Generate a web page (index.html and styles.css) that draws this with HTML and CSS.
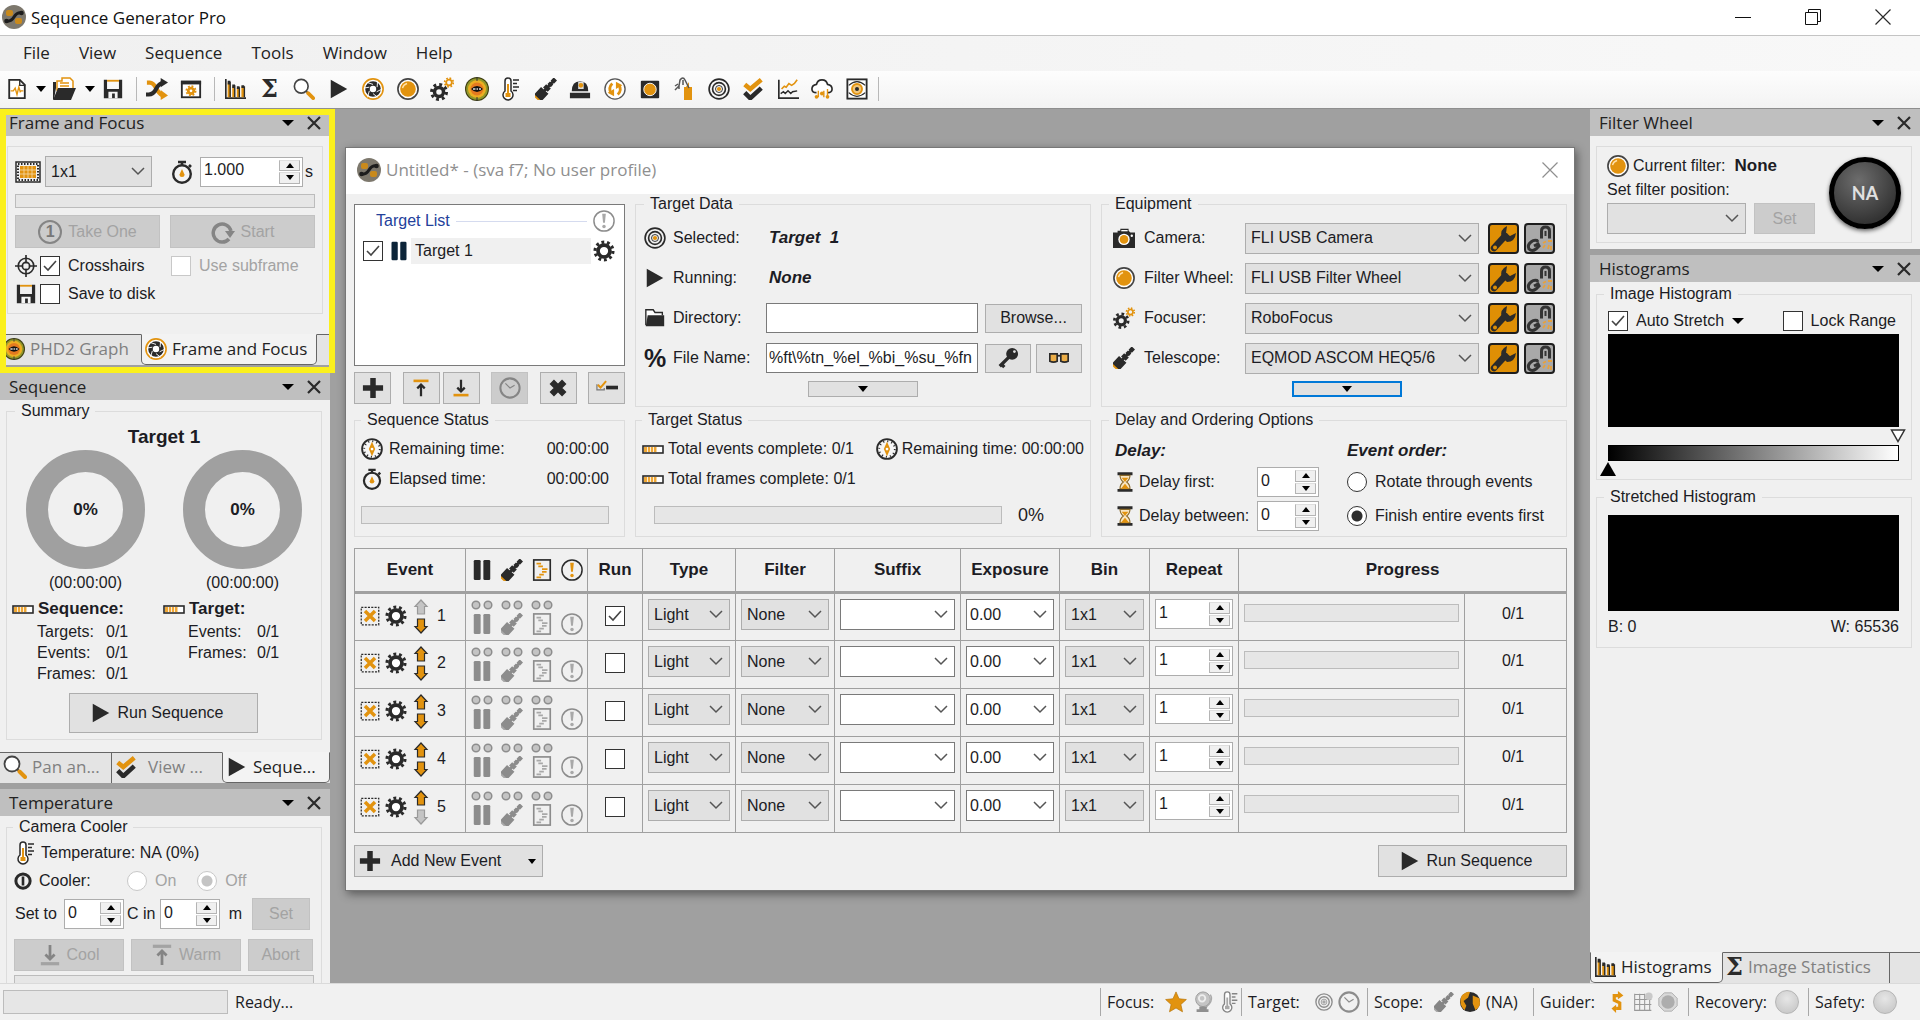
FILE: index.html
```html
<!DOCTYPE html>
<html lang="en">
<head>
<meta charset="utf-8">
<title>Sequence Generator Pro</title>
<link rel="stylesheet" href="styles.css">
</head>
<body>
<svg class="sprite" aria-hidden="true">
  <symbol id="logo" viewBox="0 0 24 24"><circle cx="12" cy="12" r="12" fill="#7d786d"/><rect x="4" y="5" width="7" height="6" rx="2" fill="#c98a1c"/><rect x="13" y="13" width="7" height="6" rx="2" fill="#c98a1c"/><path d="M4 16 Q9 17 12 12 T20 8" fill="none" stroke="#1d1d1d" stroke-width="3"/><circle cx="4.500" cy="16" r="2.300" fill="#1d1d1d"/><circle cx="19.500" cy="8" r="2.300" fill="#1d1d1d"/></symbol>
  <symbol id="doc" viewBox="0 0 24 24"><path d="M3.500 2H15l5.500 5.500V22h-17z" fill="#fff" stroke="currentColor" stroke-width="2"/><path d="M15 2v6h6" fill="none" stroke="currentColor" stroke-width="1.500"/><path d="M5 14h3l2-3 2 7 2-8 1.500 5 1-1H19" fill="none" stroke="var(--amber)" stroke-width="1.500"/></symbol>
  <symbol id="open" viewBox="0 0 24 24"><path d="M5 4h5V1h8l3 3v9H5z" fill="#fff" stroke="var(--amber)" stroke-width="1.500"/><path d="M8 6h9M8 9h9" stroke="var(--amber)" stroke-width="1.500"/><path d="M1 22V5h3v6l-2 11z" fill="currentColor"/><path d="M6 11h18l-5 12H1z" fill="currentColor"/></symbol>
  <symbol id="save" viewBox="0 0 24 24"><path d="M2 2h3.500v10h13V2H22v20H2z" fill="currentColor"/><path d="M5.500 3h13" stroke="var(--amber)" stroke-width="2"/><path d="M7 22v-7h10v7h-3v-5h-3v5z" fill="#f4f4f4"/></symbol>
  <symbol id="shuffle" viewBox="0 0 24 24"><path d="M1 5h3q4 0 7 6t7 8" fill="none" stroke="var(--amber)" stroke-width="4.500"/><path d="M16 13l8 6-8 5z" fill="var(--amber)"/><path d="M0 18h3q5 0 8-6t8-7" fill="none" stroke="currentColor" stroke-width="4.500"/><path d="M16 0l8 5-8 5z" fill="currentColor"/></symbol>
  <symbol id="wingear" viewBox="0 0 24 24"><rect x="2" y="4" width="20" height="17" fill="#fff" stroke="currentColor" stroke-width="2"/><path d="M1 3h22v4H1z" fill="currentColor"/><circle cx="12" cy="14" r="3" fill="none" stroke="var(--amber)" stroke-width="3"/><circle cx="12" cy="14" r="5" fill="none" stroke="var(--amber)" stroke-width="2" stroke-dasharray="2 1.920"/></symbol>
  <symbol id="bars" viewBox="0 0 24 24"><path d="M2 1v21h22" fill="none" stroke="currentColor" stroke-width="1.800"/><path d="M4 5h3v16H4zM9 9h3v12H9zM14 11h3v10h-3zM19 9h3v12h-3z" fill="var(--amber)"/><path d="M4 3h3v4H4zM6 4h1.500v17H6zM9 7h3v4H9zM11 8h1.500v13H11zM14 9h3v3h-3zM16 10h1.500v11H16zM19 8h3v3h-3zM21.500 9H23v12h-1.500z" fill="currentColor"/></symbol>
  <symbol id="search" viewBox="0 0 24 24"><circle cx="9" cy="9" r="7.500" fill="#fff" stroke="#444" stroke-width="1.800"/><path d="M14 14l3 3" stroke="#444" stroke-width="2"/><path d="M16.500 16.500L22 22" stroke="var(--amber)" stroke-width="4" stroke-linecap="round"/></symbol>
  <symbol id="play" viewBox="0 0 24 24"><path d="M3 2v20l18-10z" fill="currentColor"/></symbol>
  <symbol id="shutter" viewBox="0 0 24 24"><circle cx="12" cy="12" r="11" fill="#fff" stroke="var(--amber)" stroke-width="1.800"/><circle cx="12" cy="12" r="6" fill="none" stroke="currentColor" stroke-width="5"/><path d="M12 7l-6-2M16.500 10L17 3M16 15l6-3M12 17l5 4M8 14l-2 7M8 10l-6 1" stroke="#fff" stroke-width="1"/></symbol>
  <symbol id="filter" viewBox="0 0 24 24"><circle cx="12" cy="12" r="11" fill="#fff" stroke="#444" stroke-width="1.800"/><circle cx="12" cy="12" r="8.500" fill="var(--amber)"/><path d="M6 11q1-4 5-5" fill="none" stroke="#ffe0a8" stroke-width="1.500"/></symbol>
  <symbol id="gear" viewBox="0 0 24 24"><circle cx="12" cy="12" r="6.500" fill="#fff" stroke="currentColor" stroke-width="4"/><circle cx="12" cy="12" r="9.750" fill="none" stroke="currentColor" stroke-width="3.500" stroke-dasharray="3.060 3.060"/></symbol>
  <symbol id="gears" viewBox="0 0 24 24"><circle cx="9" cy="15" r="4.500" fill="none" stroke="currentColor" stroke-width="3.500"/><circle cx="9" cy="15" r="7.500" fill="none" stroke="currentColor" stroke-width="3" stroke-dasharray="2.900 2.990"/><circle cx="19" cy="5.500" r="2.800" fill="none" stroke="var(--amber)" stroke-width="1.800"/><circle cx="19" cy="5.500" r="4.300" fill="none" stroke="var(--amber)" stroke-width="1.800" stroke-dasharray="1.690 1.690"/></symbol>
  <symbol id="phd" viewBox="0 0 24 24"><circle cx="12" cy="12" r="12" fill="#3f3f14"/><circle cx="12" cy="12" r="10.800" fill="#93992a"/><circle cx="12" cy="12" r="9" fill="#ecae22"/><circle cx="12" cy="12" r="6.500" fill="#e57a20"/><path d="M6 12q6-6 12 0-6 6-12 0z" fill="#111"/><path d="M8 12h2.500M11.500 12h1.500M14 12h2" stroke="#ddd" stroke-width="1.500"/><path d="M12 0v4M12 20v4" stroke="#333"/></symbol>
  <symbol id="thermo" viewBox="0 0 24 24"><path d="M6 14V4a3 3 0 0 1 6 0v10a5 5 0 1 1-6 0z" fill="#fff" stroke="currentColor" stroke-width="1.500"/><path d="M8 7h2v9h1.500v4h-5v-4H8z" fill="var(--amber)"/><path d="M14 3h6M14 6.500h4M14 10h6M14 13.500h4" stroke="currentColor" stroke-width="1.600"/></symbol>
  <symbol id="scope" viewBox="0 0 24 24"><g transform="rotate(-47 12 12)"><path d="M-3 7.500h3v9h-3z" fill="var(--amber)"/><path d="M-1 6.500h11v11H-1zM11 8.500h5v7h-5zM17 9.500h4v5h-4zM22 9.500h5v5h-5zM9 10.500h15v3H9z" fill="currentColor"/></g></symbol>
  <symbol id="dome" viewBox="0 0 24 24"><path d="M1 16h22v6H1zM3 14.500q0-11 9-11t9 11z" fill="currentColor"/><path d="M10 4h6v8h-6z" fill="#ddd"/><circle cx="13" cy="8" r="2.500" fill="var(--amber)"/></symbol>
  <symbol id="cycle" viewBox="0 0 24 24"><circle cx="12" cy="12" r="11" fill="#fff" stroke="#555" stroke-width="1.500"/><path d="M9 6q-5 5-1 11M15 18q5-5 1-11" fill="none" stroke="var(--amber)" stroke-width="3"/><path d="M4 16l7-4v8zM20 8l-7 4V4z" fill="var(--amber)"/></symbol>
  <symbol id="flat" viewBox="0 0 24 24"><rect x="2" y="3" width="20" height="19" rx="1" fill="currentColor"/><circle cx="12" cy="12.500" r="6.800" fill="var(--amber)" stroke="#fff"/></symbol>
  <symbol id="hand" viewBox="0 0 24 24"><path d="M12 10h2l3-5v5h3v13h-8z" fill="var(--amber)"/><path d="M3 13l4-4 1-6q3-4 5 0l4 8M7 12V8M6 7L3 9M11 3v5" fill="none" stroke="#555" stroke-width="1.500"/></symbol>
  <symbol id="target" viewBox="0 0 24 24"><g fill="none" stroke="currentColor"><circle cx="12" cy="12" r="10.800" stroke-width="1.800"/><circle cx="12" cy="12" r="7" stroke-width="1.800"/><circle cx="12" cy="12" r="3.800" stroke-width="1"/></g><circle cx="12" cy="12" r="2.300" fill="var(--amber)"/></symbol>
  <symbol id="checks" viewBox="0 0 24 24"><path d="M3 16l6 6L21 11" fill="none" stroke="currentColor" stroke-width="5"/><path d="M3 7l6 5L21 2" fill="none" stroke="var(--amber)" stroke-width="5"/></symbol>
  <symbol id="chart" viewBox="0 0 24 24"><path d="M2 2v20h22" fill="none" stroke="currentColor" stroke-width="1.800"/><path d="M5 12l3-3 2 1 3-4 3 2 3-2 3-4" fill="none" stroke="var(--amber)" stroke-width="1.800"/><path d="M4 17l3-2 2 2 3-3 3 3 2-2 5-1" fill="none" stroke="currentColor" stroke-width="1.500"/></symbol>
  <symbol id="cloud" viewBox="0 0 24 24"><path d="M6 16q-5 0-5-4t5-5q1-5 6-5t6 5q5 1 5 5t-5 4" fill="#fff" stroke="currentColor" stroke-width="1.800"/><path d="M8 14v7M14 14v7M18 12v8" stroke="var(--amber)" stroke-width="1.500"/><circle cx="6" cy="20.500" r="2" fill="var(--amber)"/><circle cx="12" cy="17" r="2.200" fill="var(--amber)"/><circle cx="18" cy="20.500" r="2" fill="var(--amber)"/></symbol>
  <symbol id="eye" viewBox="0 0 24 24"><rect x="1.500" y="1.500" width="21" height="21" fill="#fff" stroke="currentColor" stroke-width="2"/><path d="M3 8q9-8 18 0M3 16q9 8 18 0" fill="none" stroke="currentColor" stroke-width="1.200"/><circle cx="12" cy="12" r="5.500" fill="#f2c67a" stroke="var(--amber)" stroke-width="2"/><circle cx="12" cy="12" r="2.200" fill="currentColor"/></symbol>
  <symbol id="sensor" viewBox="0 0 26 22"><rect x="1" y="1" width="24" height="20" fill="none" stroke="currentColor" stroke-width="1.500"/><rect x="3" y="3" width="20" height="16" fill="none" stroke="currentColor" stroke-width="2" stroke-dasharray="1.500 1.500"/><path d="M5 5h16v12H5z" fill="var(--amber)"/><path d="M5 9h16M5 13h16M9 5v12M13 5v12M17 5v12" stroke="#f6dba8" stroke-width=".8"/></symbol>
  <symbol id="watch" viewBox="0 0 24 24"><circle cx="12" cy="14" r="8.800" fill="#f4f4f4" stroke="currentColor" stroke-width="2.400"/><path d="M8 2h8M12 2v4M19 5l2 2" stroke="currentColor" stroke-width="2.600"/><path d="M12 9l2.500 5.500a2.500 2.500 0 0 1-5 0z" fill="var(--amber)"/></symbol>
  <symbol id="compass" viewBox="0 0 24 24"><circle cx="12" cy="12" r="10.800" fill="#f6f6f6" stroke="currentColor" stroke-width="2"/><circle cx="12" cy="12" r="8.500" fill="none" stroke="currentColor" stroke-width="2" stroke-dasharray="1.200 3.250"/><path d="M12 4l3.500 8-3.500 8-3.500-8z" fill="var(--amber)"/><circle cx="12" cy="12" r="1.500" fill="#fff"/></symbol>
  <symbol id="redo" viewBox="0 0 24 24"><path d="M18 19a9 9 0 1 1 2-8" fill="none" stroke="currentColor" stroke-width="3.500"/><path d="M14 11h10l-5 7z" fill="currentColor"/></symbol>
  <symbol id="cross" viewBox="0 0 24 24"><g fill="none" stroke="currentColor" stroke-width="1.800"><circle cx="12" cy="12" r="8.500"/><circle cx="12" cy="12" r="4"/><path d="M12 0v9M12 15v9M0 12h9M15 12h9"/></g></symbol>
  <symbol id="film" viewBox="0 0 22 9"><rect x="1" y="1" width="20" height="7" fill="#fff" stroke="currentColor" stroke-width="1.600"/><path d="M2 2h12.500v5H2z" fill="#efa838"/><path d="M5.500 2v5M8.500 2v5M11.500 2v5" stroke="#fff" stroke-width=".8"/></symbol>
  <symbol id="power" viewBox="0 0 24 24"><circle cx="12" cy="12" r="9.500" fill="none" stroke="currentColor" stroke-width="4"/><path d="M12 6v12" stroke="currentColor" stroke-width="3.500"/></symbol>
  <symbol id="down" viewBox="0 0 24 24"><path d="M12 1v15M7 11.500l5 5 5-5" fill="none" stroke="currentColor" stroke-width="3"/><path d="M2 21.500h20" stroke="var(--amber)" stroke-width="3.500"/></symbol>
  <symbol id="up" viewBox="0 0 24 24"><path d="M12 23V8M7 12.500l5-5 5 5" fill="none" stroke="currentColor" stroke-width="3"/><path d="M2 2.500h20" stroke="var(--amber)" stroke-width="3.500"/></symbol>
  <symbol id="alert" viewBox="0 0 24 24"><circle cx="12" cy="12" r="11" fill="none" stroke="currentColor" stroke-width="1.600"/><path d="M10 4h4l-1 10h-2z" fill="var(--amber)"/><circle cx="12" cy="18" r="1.900" fill="var(--amber)"/></symbol>
  <symbol id="pause" viewBox="0 0 24 24"><rect x="3" y="1" width="7.500" height="22" rx="1.500" fill="currentColor"/><rect x="13.500" y="1" width="7.500" height="22" rx="1.500" fill="currentColor"/></symbol>
  <symbol id="plus" viewBox="0 0 24 24"><path d="M9 1h6v8h8v6h-8v8H9v-8H1V9h8z" fill="currentColor"/></symbol>
  <symbol id="clock" viewBox="0 0 24 24"><circle cx="12" cy="12" r="10.500" fill="none" stroke="currentColor" stroke-width="2.200"/><path d="M7 7l5 5 5-3" fill="none" stroke="currentColor" stroke-width="1.300"/></symbol>
  <symbol id="x" viewBox="0 0 24 24"><path d="M4.500 4.500l15 15M19.500 4.500l-15 15" stroke="currentColor" stroke-width="7.500"/></symbol>
  <symbol id="checkdash" viewBox="0 0 24 24"><path d="M1 8v6h8v-2" fill="none" stroke="#777" stroke-width="1.300"/><path d="M2 8.500l3 3 6-7" fill="none" stroke="var(--amber)" stroke-width="2.200"/><path d="M11 11.500h13" stroke="currentColor" stroke-width="4"/></symbol>
  <symbol id="folder" viewBox="0 0 24 24"><path d="M2 20V3h8l2 3h8v3" fill="#fff" stroke="currentColor" stroke-width="1.500"/><path d="M4 9h18v12H2z" fill="currentColor"/></symbol>
  <symbol id="key" viewBox="0 0 24 24"><circle cx="16.500" cy="7.500" r="6.500" fill="currentColor"/><circle cx="19" cy="5" r="1.500" fill="#e1e1e1"/><path d="M13 11L3 21M5 19l3 3" stroke="currentColor" stroke-width="3.600"/></symbol>
  <symbol id="glasses" viewBox="0 0 24 24"><path d="M2 7.500h8v8q-4 2-8 0zM14 7.500h8v8q-4 2-8 0z" fill="#ecae48" stroke="currentColor" stroke-width="1.800"/><path d="M10 9.500h4" stroke="currentColor" stroke-width="2"/></symbol>
  <symbol id="camera" viewBox="0 0 24 24"><path d="M0 6h5V4h3V2h9v2l2 2h5v17H0z" fill="currentColor"/><path d="M9 4h7" stroke="#fff" stroke-width="1.400"/><circle cx="12" cy="13.500" r="6.200" fill="#fff"/><circle cx="12" cy="13.500" r="4.700" fill="var(--amber)"/><circle cx="20.500" cy="9.500" r="1.300" fill="#fff"/></symbol>
  <symbol id="wrench" viewBox="0 0 31 31"><rect x="1" y="1" width="29" height="29" rx="3" fill="#df8f05" stroke="#1e1e1e" stroke-width="2"/><path d="M6 25L17 13" stroke="#2b2b2b" stroke-width="6.500" stroke-linecap="round"/><path d="M14 14q-3-7 5-11l-1 7 4 3 6-3q-1 9-9 9z" fill="#2b2b2b"/><circle cx="7" cy="24.500" r="2" fill="#df8f05"/></symbol>
  <symbol id="link" viewBox="0 0 31 31"><rect x="1" y="1" width="29" height="29" rx="3" fill="#a9a9a9" stroke="#1e1e1e" stroke-width="2"/><g fill="none" stroke="#333" stroke-width="3"><path d="M19 14h-1.500V8q0-4 4-4t4 4v6H24"/><path d="M14 19l-1-1.500q-3-1-6 1.500-4 3-2 7 3 3 7 0l3-3-1-2-4 2"/></g><path d="M21.500 8v5" stroke="#333" stroke-width="2"/><path d="M19 20l3-1.500M24 18h4M19 25l2-3M24 26l1-4M27 27v-4" stroke="#e8a13a" stroke-width="1.800"/></symbol>
  <symbol id="glass" viewBox="0 0 24 24"><path d="M3 2h18M3 22h18" stroke="currentColor" stroke-width="3.500"/><path d="M6 4q0 5 4 8-4 3-4 8h12q0-5-4-8 4-3 4-8z" fill="#f8e5c2" stroke="#8b6a2a" stroke-width="1.300"/><path d="M8 7h8l-4 5zM12 14l5 6H7z" fill="var(--amber)"/></symbol>
  <symbol id="script" viewBox="0 0 24 24"><rect x="3" y="1" width="18" height="22" fill="none" stroke="currentColor" stroke-width="1.800"/><path d="M6 5h5M8 8h5M12 11h6M12 14h5M9 17h5M6 20h5" stroke="var(--amber)" stroke-width="2"/></symbol>
  <symbol id="remove" viewBox="0 0 24 24"><rect x="1.500" y="1.500" width="21" height="21" fill="none" stroke="currentColor" stroke-width="1.500" stroke-dasharray="2.500 1.500"/><path d="M6 6l12 12M18 6L6 18" stroke="var(--amber)" stroke-width="4.200"/></symbol>
  <symbol id="arrow" viewBox="0 0 16 16"><path d="M8 1l6 6.500h-2.500V15h-7V7.500H2z" fill="var(--amber)" stroke="currentColor" stroke-width="1.200"/></symbol>
  <symbol id="lights" viewBox="0 0 22 10"><circle cx="5" cy="5" r="3.800" fill="#c4c4c4" stroke="#8d8d8d" stroke-width="1.500"/><circle cx="17" cy="5" r="3.800" fill="#c4c4c4" stroke="#8d8d8d" stroke-width="1.500"/></symbol>
  <symbol id="star" viewBox="0 0 24 24"><path d="M12 1l3.300 7.500 8 .8-6 5.400 1.800 8L12 18.500 4.900 22.700l1.800-8-6-5.400 8-.8z" fill="var(--amber)" stroke="#b9770c" stroke-width=".8"/></symbol>
  <symbol id="bulb" viewBox="0 0 24 24"><circle cx="12" cy="9" r="8" fill="#c4c4c4" stroke="#999"/><circle cx="11" cy="8" r="3.500" fill="none" stroke="#eee" stroke-width="2"/><path d="M20 4q3 5-1 10-3 2-4 5" fill="none" stroke="#aaa" stroke-width="1.500"/><path d="M8 17h8v3h2v3H5v-3h3z" fill="#8f8f8f"/></symbol>
  <symbol id="globe" viewBox="0 0 24 24"><circle cx="12" cy="12" r="11" fill="#2b2b2b"/><path d="M3 5q5-5 9-4l-2 6-5 4 3 5-2 5Q-1 14 3 5zM15 5l7 3q3 8-4 13l-3-7z" fill="var(--amber)"/></symbol>
  <symbol id="snake" viewBox="0 0 24 24"><path d="M14 5H9v5l6 3v6h-4" fill="none" stroke="var(--amber)" stroke-width="3.500"/><path d="M13 0l6 5-6 4zM11 15v9l-5-5z" fill="var(--amber)"/></symbol>
  <symbol id="grid" viewBox="0 0 24 24"><path d="M2 2v20h20M8 2v20M14 2v20M20 8v14M2 3h12M2 9h20M2 15h20" fill="none" stroke="#999" stroke-width="1.300"/><circle cx="19" cy="5" r="4.500" fill="#c9c9c9"/></symbol>
  <symbol id="octagon" viewBox="0 0 24 24"><path d="M7.500 1h9L23 7.500v9L16.500 23h-9L1 16.500v-9z" fill="#d9d9d9" stroke="#a6a6a6"/><circle cx="12" cy="12" r="8" fill="#adadad"/></symbol>
  <symbol id="close" viewBox="0 0 16 16"><path d="M2 2l12 12M14 2L2 14" stroke="currentColor" stroke-width="2.200"/></symbol>
  <symbol id="thinclose" viewBox="0 0 16 16"><path d="M.5.500l15 15M15.500.500l-15 15" stroke="currentColor" stroke-width="1.200"/></symbol>
</svg>

<header class="titlebar">
  <svg class="i24"><use href="#logo"/></svg><h1>Sequence Generator Pro</h1>
  <div class="winctl">
    <button aria-label="Minimize"><svg class="i16"><path d="M0 8.500h16" stroke="#111"/></svg></button>
    <button aria-label="Restore"><svg class="i16"><path d="M.5 3.500h12v12H.5zM3.500 3V.500h12v12H13" fill="none" stroke="#111"/></svg></button>
    <button aria-label="Close"><svg class="i16"><use href="#thinclose"/></svg></button>
  </div>
</header>
<nav class="menubar"><button>File</button><button>View</button><button>Sequence</button><button>Tools</button><button>Window</button><button>Help</button></nav>
<div class="toolbar">
  <button aria-label="New"><svg class="i22"><use href="#doc"/></svg></button><button class="drop" aria-label="New options"></button>
  <button aria-label="Open"><svg class="i24"><use href="#open"/></svg></button><button class="drop" aria-label="Open options"></button>
  <button aria-label="Save"><svg class="i22"><use href="#save"/></svg></button><i class="sep"></i>
  <button aria-label="Shuffle"><svg class="i22"><use href="#shuffle"/></svg></button>
  <button aria-label="Settings"><svg class="i22"><use href="#wingear"/></svg></button><i class="sep"></i>
  <div class="tools">
    <button aria-label="Histograms"><svg class="i22"><use href="#bars"/></svg></button>
    <button aria-label="Statistics"><span class="sigma">Σ</span></button>
    <button aria-label="Zoom"><svg class="i22"><use href="#search"/></svg></button>
    <button aria-label="Run"><svg class="i22"><use href="#play"/></svg></button>
    <button aria-label="Frame and focus"><svg class="i22"><use href="#shutter"/></svg></button>
    <button aria-label="Filter wheel"><svg class="i22"><use href="#filter"/></svg></button>
    <button aria-label="Focuser"><svg class="i24"><use href="#gears"/></svg></button>
    <button aria-label="Guider"><svg class="i24"><use href="#phd"/></svg></button>
    <button aria-label="Temperature"><svg class="i24"><use href="#thermo"/></svg></button>
    <button aria-label="Telescope"><svg class="i22"><use href="#scope"/></svg></button>
    <button aria-label="Observatory"><svg class="i22"><use href="#dome"/></svg></button>
    <button aria-label="Rotator"><svg class="i22"><use href="#cycle"/></svg></button>
    <button aria-label="Flat box"><svg class="i22"><use href="#flat"/></svg></button>
    <button aria-label="Manual control"><svg class="i24"><use href="#hand"/></svg></button>
    <button aria-label="Targets"><svg class="i22"><use href="#target"/></svg></button>
    <button aria-label="Validate"><svg class="i22"><use href="#checks"/></svg></button>
    <button aria-label="Chart"><svg class="i22"><use href="#chart"/></svg></button>
    <button aria-label="Weather"><svg class="i22"><use href="#cloud"/></svg></button>
    <button aria-label="Image review"><svg class="i22"><use href="#eye"/></svg></button>
  </div><i class="sep"></i>
</div>

<main class="workspace">
  <aside class="dock">
    <section class="panel focus">
      <header class="caption"><h2>Frame and Focus</h2><button class="drop" aria-label="Panel menu"></button><button aria-label="Close panel"><svg class="i16"><use href="#close"/></svg></button></header>
      <div class="pbody"><div class="box stack">
        <div class="row r1"><svg class="sensor"><use href="#sensor"/></svg><select class="dd" aria-label="Binning"><option>1x1</option></select><svg class="i24 timer"><use href="#watch"/></svg><span class="spin wide"><input aria-label="Exposure seconds" value="1.000"><span><button aria-label="Increase"></button><button aria-label="Decrease"></button></span></span><span>s</span></div>
        <div class="bar short"></div>
        <div class="row halves"><button class="btn" disabled><span class="one">1</span>Take One</button><button class="btn" disabled><svg class="i24"><use href="#redo"/></svg>Start</button></div>
        <div class="row checks"><div><svg class="i22"><use href="#cross"/></svg><label class="tick"><input type="checkbox" checked>Crosshairs</label></div><label class="tick off"><input type="checkbox" disabled>Use subframe</label></div>
        <div class="row checks"><div><svg class="i22"><use href="#save"/></svg><label class="tick"><input type="checkbox">Save to disk</label></div></div>
      </div></div>
      <nav class="tabs"><button class="t141"><svg class="i22"><use href="#phd"/></svg>PHD2 Graph</button><button class="active t176"><svg class="i22"><use href="#shutter"/></svg>Frame and Focus</button><i></i></nav>
      <div class="highlight"></div>
    </section>

    <section class="panel">
      <header class="caption"><h2>Sequence</h2><button class="drop" aria-label="Panel menu"></button><button aria-label="Close panel"><svg class="i16"><use href="#close"/></svg></button></header>
      <div class="pbody2"><fieldset class="summary"><legend>Summary</legend>
        <h3>Target 1</h3>
        <div class="donuts"><div><div class="donut">0%</div>(00:00:00)</div><div><div class="donut">0%</div>(00:00:00)</div></div>
        <div class="stats">
          <dl><dt class="sh"><svg class="film"><use href="#film"/></svg>Sequence:</dt><dt>Targets:</dt><dd>0/1</dd><dt>Events:</dt><dd>0/1</dd><dt>Frames:</dt><dd>0/1</dd></dl>
          <dl><dt class="sh"><svg class="film"><use href="#film"/></svg>Target:</dt><dt>Events:</dt><dd>0/1</dd><dt>Frames:</dt><dd>0/1</dd></dl>
        </div>
        <button class="btn run big"><svg class="i22"><use href="#play"/></svg>Run Sequence</button>
      </fieldset></div>
      <nav class="tabs"><button class="t111"><svg class="i24"><use href="#search"/></svg>Pan an...</button><button class="t111 bar-left"><svg class="i22"><use href="#checks"/></svg><span class="far">View ...</span></button><button class="active grow"><svg class="i22"><use href="#play"/></svg>Seque...</button></nav>
    </section>

    <section class="panel">
      <header class="caption"><h2>Temperature</h2><button class="drop" aria-label="Panel menu"></button><button aria-label="Close panel"><svg class="i16"><use href="#close"/></svg></button></header>
      <div class="pbody2"><fieldset class="cooler"><legend>Camera Cooler</legend>
        <div class="row line"><svg class="i24"><use href="#thermo"/></svg><span>Temperature: NA (0%)</span></div>
        <div class="row line"><svg class="i18"><use href="#power"/></svg><span class="clabel">Cooler:</span><label class="tick off"><input type="radio" name="cooler" disabled>On</label><label class="tick off"><input type="radio" name="cooler" checked disabled>Off</label></div>
        <div class="setrow"><label for="deg">Set to</label><span class="spin"><input id="deg" value="0"><span><button aria-label="Increase"></button><button aria-label="Decrease"></button></span></span><label for="mins">C in</label><span class="spin"><input id="mins" value="0"><span><button aria-label="Increase"></button><button aria-label="Decrease"></button></span></span><span>m</span><button class="btn" disabled>Set</button></div>
        <div class="coolbtns"><button class="btn" disabled><svg class="i22"><use href="#down"/></svg>Cool</button><button class="btn" disabled><svg class="i22"><use href="#up"/></svg>Warm</button><button class="btn" disabled>Abort</button></div>
        <div class="bar"></div>
      </fieldset></div>
    </section>
  </aside>

  <div class="desktop">
    <section class="window">
      <header class="wtitle"><svg class="i24"><use href="#logo"/></svg><h2>Untitled* - (sva f7; No user profile)</h2><button aria-label="Close"><svg class="i16"><use href="#thinclose"/></svg></button></header>
      <div class="wbody">
        <div class="top">
          <div class="targets">
            <div class="list">
              <div class="lhead"><h3>Target List</h3><i></i><svg class="i22 dim"><use href="#alert"/></svg></div>
              <div class="litem"><input type="checkbox" aria-label="Enable Target 1" checked><svg class="i20 navy"><use href="#pause"/></svg><span>Target 1</span><svg class="i22"><use href="#gear"/></svg></div>
            </div>
            <div class="lbtns">
              <button class="btn" aria-label="Add target"><svg class="i22"><use href="#plus"/></svg></button>
              <div><button class="btn" aria-label="Move to top"><svg class="i18"><use href="#up"/></svg></button><button class="btn" aria-label="Move to bottom"><svg class="i18"><use href="#down"/></svg></button></div>
              <button class="btn" disabled aria-label="Schedule"><svg class="i22"><use href="#clock"/></svg></button>
              <button class="btn" aria-label="Delete target"><svg class="i20"><use href="#x"/></svg></button>
              <button class="btn" aria-label="Reset"><svg class="i22"><use href="#checkdash"/></svg></button>
            </div>
          </div>
          <fieldset class="tdata"><legend>Target Data</legend>
            <div class="trow"><svg class="i22"><use href="#target"/></svg><span>Selected:</span><em>Target&nbsp; 1</em></div>
            <div class="trow"><svg class="i22"><use href="#play"/></svg><span>Running:</span><em>None</em></div>
            <div class="trow"><svg class="i22"><use href="#folder"/></svg><label for="dir">Directory:</label><input id="dir" class="txt"><button class="btn">Browse...</button></div>
            <div class="trow"><b class="pct">%</b><label for="fname">File Name:</label><input id="fname" class="txt" value="%ft\%tn_%el_%bi_%su_%fn"><span class="pair"><button class="btn" aria-label="Key"><svg class="i22"><use href="#key"/></svg></button><button class="btn" aria-label="Preview"><svg class="i22"><use href="#glasses"/></svg></button></span></div>
            <button class="btn more drop" aria-label="More target data"></button>
          </fieldset>
          <fieldset class="equip"><legend>Equipment</legend>
            <div class="erow"><svg class="i22"><use href="#camera"/></svg><label for="e1">Camera:</label><select class="dd" id="e1"><option>FLI USB Camera</option></select><span class="pair"><button aria-label="Camera settings"><svg class="i31"><use href="#wrench"/></svg></button><button aria-label="Connect camera"><svg class="i31"><use href="#link"/></svg></button></span></div>
            <div class="erow"><svg class="i22"><use href="#filter"/></svg><label for="e2">Filter Wheel:</label><select class="dd" id="e2"><option>FLI USB Filter Wheel</option></select><span class="pair"><button aria-label="Filter wheel settings"><svg class="i31"><use href="#wrench"/></svg></button><button aria-label="Connect filter wheel"><svg class="i31"><use href="#link"/></svg></button></span></div>
            <div class="erow"><svg class="i22"><use href="#gears"/></svg><label for="e3">Focuser:</label><select class="dd" id="e3"><option>RoboFocus</option></select><span class="pair"><button aria-label="Focuser settings"><svg class="i31"><use href="#wrench"/></svg></button><button aria-label="Connect focuser"><svg class="i31"><use href="#link"/></svg></button></span></div>
            <div class="erow"><svg class="i22"><use href="#scope"/></svg><label for="e4">Telescope:</label><select class="dd" id="e4"><option>EQMOD ASCOM HEQ5/6</option></select><span class="pair"><button aria-label="Telescope settings"><svg class="i31"><use href="#wrench"/></svg></button><button aria-label="Connect telescope"><svg class="i31"><use href="#link"/></svg></button></span></div>
            <button class="btn more drop selected" aria-label="More equipment"></button>
          </fieldset>

          <fieldset class="status"><legend>Sequence Status</legend>
            <div class="srow"><svg class="i22"><use href="#compass"/></svg><span>Remaining time:</span><span class="end">00:00:00</span></div>
            <div class="srow"><svg class="i22"><use href="#watch"/></svg><span>Elapsed time:</span><span class="end">00:00:00</span></div>
            <div class="bar tall"></div>
          </fieldset>
          <fieldset class="status tstat"><legend>Target Status</legend>
            <div class="srow"><svg class="film"><use href="#film"/></svg><span>Total events complete: 0/1</span><svg class="i22 end"><use href="#compass"/></svg><span>Remaining time: 00:00:00</span></div>
            <div class="srow"><svg class="film"><use href="#film"/></svg><span>Total frames complete: 0/1</span></div>
            <div class="tprog"><div class="bar"></div><span>0%</span></div>
          </fieldset>
          <fieldset class="delay"><legend>Delay and Ordering Options</legend>
            <div class="dcols">
              <div><h4>Delay:</h4>
                <div class="drow"><svg class="i20"><use href="#glass"/></svg><label for="d1">Delay first:</label><span class="spin"><input id="d1" value="0"><span><button aria-label="Increase"></button><button aria-label="Decrease"></button></span></span></div>
                <div class="drow"><svg class="i20"><use href="#glass"/></svg><label for="d2">Delay between:</label><span class="spin"><input id="d2" value="0"><span><button aria-label="Increase"></button><button aria-label="Decrease"></button></span></span></div>
              </div>
              <div><h4>Event order:</h4>
                <div class="drow"><label class="tick"><input type="radio" name="order">Rotate through events</label></div>
                <div class="drow"><label class="tick"><input type="radio" name="order" checked>Finish entire events first</label></div>
              </div>
            </div>
          </fieldset>
        </div>

        <table class="events">
          <colgroup><col class="c111"><col class="c122"><col class="c55"><col class="c93"><col class="c99"><col class="c126"><col class="c99"><col class="c90"><col class="c89"><col class="c226"><col class="c102"></colgroup>
          <thead><tr><th>Event</th><th><div class="flags"><svg class="i22"><use href="#pause"/></svg><svg class="i22"><use href="#scope"/></svg><svg class="i22"><use href="#script"/></svg><svg class="i22"><use href="#alert"/></svg></div></th><th>Run</th><th>Type</th><th>Filter</th><th>Suffix</th><th>Exposure</th><th>Bin</th><th>Repeat</th><th colspan="2">Progress</th></tr></thead>
          <tbody>
            <tr>
              <td><div class="ev"><svg class="i20"><use href="#remove"/></svg><svg class="i22"><use href="#gear"/></svg><span class="ud"><svg class="none"><use href="#arrow"/></svg><svg><use href="#arrow"/></svg></span>1</div></td>
              <td><div class="flags dim"><span><svg class="lt"><use href="#lights"/></svg><svg class="i22"><use href="#pause"/></svg></span><span><svg class="lt"><use href="#lights"/></svg><svg class="i22"><use href="#scope"/></svg></span><span><svg class="lt"><use href="#lights"/></svg><svg class="i22"><use href="#script"/></svg></span><svg class="i22"><use href="#alert"/></svg></div></td>
              <td class="mid"><input type="checkbox" aria-label="Run event 1" checked></td>
              <td><select class="dd" aria-label="Type"><option>Light</option></select></td><td><select class="dd" aria-label="Filter"><option>None</option></select></td><td><select class="dd white" aria-label="Suffix"><option></option></select></td><td><select class="dd white" aria-label="Exposure"><option>0.00</option></select></td><td><select class="dd" aria-label="Bin"><option>1x1</option></select></td>
              <td><span class="spin"><input aria-label="Repeat" value="1"><span><button aria-label="Increase"></button><button aria-label="Decrease"></button></span></span></td><td><div class="bar tall"></div></td><td class="cnt">0/1</td>
            </tr>
            <tr>
              <td><div class="ev"><svg class="i20"><use href="#remove"/></svg><svg class="i22"><use href="#gear"/></svg><span class="ud"><svg><use href="#arrow"/></svg><svg><use href="#arrow"/></svg></span>2</div></td>
              <td><div class="flags dim"><span><svg class="lt"><use href="#lights"/></svg><svg class="i22"><use href="#pause"/></svg></span><span><svg class="lt"><use href="#lights"/></svg><svg class="i22"><use href="#scope"/></svg></span><span><svg class="lt"><use href="#lights"/></svg><svg class="i22"><use href="#script"/></svg></span><svg class="i22"><use href="#alert"/></svg></div></td>
              <td class="mid"><input type="checkbox" aria-label="Run event 2"></td>
              <td><select class="dd" aria-label="Type"><option>Light</option></select></td><td><select class="dd" aria-label="Filter"><option>None</option></select></td><td><select class="dd white" aria-label="Suffix"><option></option></select></td><td><select class="dd white" aria-label="Exposure"><option>0.00</option></select></td><td><select class="dd" aria-label="Bin"><option>1x1</option></select></td>
              <td><span class="spin"><input aria-label="Repeat" value="1"><span><button aria-label="Increase"></button><button aria-label="Decrease"></button></span></span></td><td><div class="bar tall"></div></td><td class="cnt">0/1</td>
            </tr>
            <tr>
              <td><div class="ev"><svg class="i20"><use href="#remove"/></svg><svg class="i22"><use href="#gear"/></svg><span class="ud"><svg><use href="#arrow"/></svg><svg><use href="#arrow"/></svg></span>3</div></td>
              <td><div class="flags dim"><span><svg class="lt"><use href="#lights"/></svg><svg class="i22"><use href="#pause"/></svg></span><span><svg class="lt"><use href="#lights"/></svg><svg class="i22"><use href="#scope"/></svg></span><span><svg class="lt"><use href="#lights"/></svg><svg class="i22"><use href="#script"/></svg></span><svg class="i22"><use href="#alert"/></svg></div></td>
              <td class="mid"><input type="checkbox" aria-label="Run event 3"></td>
              <td><select class="dd" aria-label="Type"><option>Light</option></select></td><td><select class="dd" aria-label="Filter"><option>None</option></select></td><td><select class="dd white" aria-label="Suffix"><option></option></select></td><td><select class="dd white" aria-label="Exposure"><option>0.00</option></select></td><td><select class="dd" aria-label="Bin"><option>1x1</option></select></td>
              <td><span class="spin"><input aria-label="Repeat" value="1"><span><button aria-label="Increase"></button><button aria-label="Decrease"></button></span></span></td><td><div class="bar tall"></div></td><td class="cnt">0/1</td>
            </tr>
            <tr>
              <td><div class="ev"><svg class="i20"><use href="#remove"/></svg><svg class="i22"><use href="#gear"/></svg><span class="ud"><svg><use href="#arrow"/></svg><svg><use href="#arrow"/></svg></span>4</div></td>
              <td><div class="flags dim"><span><svg class="lt"><use href="#lights"/></svg><svg class="i22"><use href="#pause"/></svg></span><span><svg class="lt"><use href="#lights"/></svg><svg class="i22"><use href="#scope"/></svg></span><span><svg class="lt"><use href="#lights"/></svg><svg class="i22"><use href="#script"/></svg></span><svg class="i22"><use href="#alert"/></svg></div></td>
              <td class="mid"><input type="checkbox" aria-label="Run event 4"></td>
              <td><select class="dd" aria-label="Type"><option>Light</option></select></td><td><select class="dd" aria-label="Filter"><option>None</option></select></td><td><select class="dd white" aria-label="Suffix"><option></option></select></td><td><select class="dd white" aria-label="Exposure"><option>0.00</option></select></td><td><select class="dd" aria-label="Bin"><option>1x1</option></select></td>
              <td><span class="spin"><input aria-label="Repeat" value="1"><span><button aria-label="Increase"></button><button aria-label="Decrease"></button></span></span></td><td><div class="bar tall"></div></td><td class="cnt">0/1</td>
            </tr>
            <tr>
              <td><div class="ev"><svg class="i20"><use href="#remove"/></svg><svg class="i22"><use href="#gear"/></svg><span class="ud"><svg><use href="#arrow"/></svg><svg class="none"><use href="#arrow"/></svg></span>5</div></td>
              <td><div class="flags dim"><span><svg class="lt"><use href="#lights"/></svg><svg class="i22"><use href="#pause"/></svg></span><span><svg class="lt"><use href="#lights"/></svg><svg class="i22"><use href="#scope"/></svg></span><span><svg class="lt"><use href="#lights"/></svg><svg class="i22"><use href="#script"/></svg></span><svg class="i22"><use href="#alert"/></svg></div></td>
              <td class="mid"><input type="checkbox" aria-label="Run event 5"></td>
              <td><select class="dd" aria-label="Type"><option>Light</option></select></td><td><select class="dd" aria-label="Filter"><option>None</option></select></td><td><select class="dd white" aria-label="Suffix"><option></option></select></td><td><select class="dd white" aria-label="Exposure"><option>0.00</option></select></td><td><select class="dd" aria-label="Bin"><option>1x1</option></select></td>
              <td><span class="spin"><input aria-label="Repeat" value="1"><span><button aria-label="Increase"></button><button aria-label="Decrease"></button></span></span></td><td><div class="bar tall"></div></td><td class="cnt">0/1</td>
            </tr>
          </tbody>
        </table>
        <footer class="wfoot"><button class="btn add"><svg class="i22"><use href="#plus"/></svg><span>Add New Event</span><i class="tri"></i></button><button class="btn run"><svg class="i22"><use href="#play"/></svg>Run Sequence</button></footer>
      </div>
    </section>
  </div>

  <aside class="dock right">
    <section class="panel">
      <header class="caption"><h2>Filter Wheel</h2><button class="drop" aria-label="Panel menu"></button><button aria-label="Close panel"><svg class="i16"><use href="#close"/></svg></button></header>
      <div class="pbody3"><div class="box wheel">
        <div><div class="row cur"><svg class="i22"><use href="#filter"/></svg><span>Current filter:</span><b>None</b></div><label for="pos">Set filter position:</label><div class="row setf"><select class="dd" id="pos"><option></option></select><button class="btn" disabled>Set</button></div></div>
        <div class="knob">NA</div>
      </div></div>
    </section>
    <section class="panel fill">
      <header class="caption"><h2>Histograms</h2><button class="drop" aria-label="Panel menu"></button><button aria-label="Close panel"><svg class="i16"><use href="#close"/></svg></button></header>
      <div class="pbody3 hist">
        <fieldset><legend>Image Histogram</legend>
          <div class="row hopts"><label class="tick"><input type="checkbox" checked>Auto Stretch <i class="tri"></i></label><label class="tick"><input type="checkbox">Lock Range</label></div>
          <div class="plot"></div>
          <div class="levels"><svg class="wp" viewBox="0 0 16 14"><path d="M1.500 1h13L8 12.500z" fill="#fff" stroke="#333" stroke-width="1.500"/></svg><div class="ramp"></div><svg class="bp" viewBox="0 0 16 14"><path d="M0 14L8 0l8 14z"/></svg></div>
        </fieldset>
        <fieldset class="str"><legend>Stretched Histogram</legend><div class="plot"></div><div class="bw"><span>B: 0</span><span>W: 65536</span></div></fieldset>
      </div>
      <nav class="tabs"><button class="active t133"><svg class="i22"><use href="#bars"/></svg>Histograms</button><button class="t166"><span class="sigma">Σ</span>Image Statistics</button><i class="bar-left"></i></nav>
    </section>
  </aside>
</main>

<footer class="statusbar">
  <div class="bar"></div><span class="ready">Ready...</span>
  <div class="st s141"><span>Focus:</span><svg class="i22"><use href="#star"/></svg><svg class="i22"><use href="#bulb"/></svg><svg class="i22 gray"><use href="#thermo"/></svg></div>
  <div class="st s126"><span>Target:</span><svg class="i18 dim push"><use href="#target"/></svg><svg class="i22 dim"><use href="#clock"/></svg></div>
  <div class="st s166"><span>Scope:</span><svg class="i20 gray"><use href="#scope"/></svg><svg class="i22"><use href="#globe"/></svg><span>(NA)</span></div>
  <div class="st s155"><span>Guider:</span><svg class="i22"><use href="#snake"/></svg><svg class="i20"><use href="#grid"/></svg><svg class="i20"><use href="#octagon"/></svg></div>
  <div class="st s120"><span>Recovery:</span><i class="lamp"></i></div>
  <div class="st s112"><span>Safety:</span><i class="lamp"></i></div>
</footer>
</body>
</html>
```
FILE: styles.css
```css
:root {
  --ink: #2a2a2a;
  --amber: #e2930f;
  --face: #f0f0f0;
  --desk: #a0a0a0;
  --ui: "Open Sans", "Noto Sans", sans-serif;
}
* { box-sizing: border-box; }
body {
  margin: 0; height: 100vh; display: flex; flex-direction: column; overflow: hidden;
  font: 16px/20px "Liberation Sans", Arial, sans-serif; color: #1c1c24; background: var(--desk);
}
h1, h2, h3, h4, dl, dd, dt { margin: 0; font-size: inherit; font-weight: normal; }
button, input, select { font: inherit; color: inherit; margin: 0; }
button { border: 0; background: none; padding: 0; display: inline-flex; align-items: center; justify-content: center; }
svg { display: block; flex: none; color: var(--ink); }
.sprite { position: absolute; width: 0; height: 0; }
.i16 { width: 16px; height: 16px; }
.i18 { width: 18px; height: 18px; }
.i20 { width: 20px; height: 20px; }
.i22 { width: 22px; height: 22px; }
.i24 { width: 24px; height: 24px; }
.i31 { width: 31px; height: 31px; }
.film { width: 22px; height: 9px; }
.navy { color: #0c2438; }
.dim, .dim svg { color: #8c8c8c; --amber: #a8a8a8; }
.gray { color: #858585; --amber: #a8a8a8; }
.sigma { font: bold 24px/22px "DejaVu Serif", serif; color: var(--ink); }

/* shared controls */
.btn { background: #e1e1e1; border: 1px solid #adadad; height: 32px; gap: 6px; white-space: nowrap; }
.btn:disabled { background: #cccccc; border-color: #c2c2c2; color: #a3a3a3; }
.btn:disabled svg { color: #858585; --amber: #a3a3a3; }
.drop::before, .tri { content: ""; border: 5px solid transparent; border-top: 6px solid #000; border-bottom: 0; }
.bar { height: 14px; background: #e6e6e6; border: 1px solid #bcbcbc; }
.bar.tall { height: 18px; }
.dd {
  appearance: none; height: 31px; width: 100%; border: 1px solid #adadad; border-radius: 0; padding: 0 24px 0 5px; color: #1c1c24;
  background: #e1e1e1 url("data:image/svg+xml,%3Csvg xmlns='http://www.w3.org/2000/svg' width='14' height='9'%3E%3Cpath d='M1 1l6 6 6-6' fill='none' stroke='%23555' stroke-width='1.500'/%3E%3C/svg%3E") no-repeat right 6px center;
}
.dd.white { background-color: #fff; border-color: #7a7a7a; padding-left: 3px; }
.txt { width: 100%; height: 30px; border: 1px solid #7a7a7a; background: #fff; padding: 0 2px; }
.spin { display: flex; height: 30px; border: 1px solid #adadad; background: #fff; padding: 2px; min-width: 0; }
.spin input { flex: 1; min-width: 0; width: 0; border: 0; background: none; padding: 0 0 3px 1px; outline: 0; }
.spin > span { display: flex; flex-direction: column; gap: 1px; width: 21px; }
.spin button { flex: 1; background: var(--face); border: 1px solid #b4b4b4; border-top-color: #dedede; }
.spin button::before { content: ""; border: 4px solid transparent; border-bottom: 5px solid #000; border-top: 0; }
.spin button:last-child::before { border-bottom: 0; border-top: 5px solid #000; }
input[type=checkbox], input[type=radio] { appearance: none; flex: none; width: 20px; height: 20px; border: 1px solid #333; background: #fff; }
input[type=radio] { border-radius: 50%; }
input[type=radio]:checked { background: radial-gradient(circle, #2e2e2e 0 5px, #fff 6px); }
input[type=checkbox]:checked { background: #fff url("data:image/svg+xml,%3Csvg xmlns='http://www.w3.org/2000/svg' width='18' height='18'%3E%3Cpath d='M3 9l4 4 8-9' fill='none' stroke='%23444' stroke-width='1.600'/%3E%3C/svg%3E") center no-repeat; }
input:disabled { border-color: #c8c8c8; }
input[type=radio]:checked:disabled { background: radial-gradient(circle, #c4c4c4 0 5px, #fff 6px); }
.tick { display: flex; align-items: center; gap: 8px; white-space: nowrap; }
.tick.off { color: #a3a3a3; }
.row { display: flex; align-items: center; }
.box { border: 1px solid #dcdcdc; }
fieldset { margin: 0; min-width: 0; border: 1px solid #dcdcdc; padding: 0; }
legend { padding: 0 6px; margin-left: 8px; line-height: 20px; }

/* frame of the application */
.titlebar { height: 36px; flex: none; display: flex; align-items: center; padding-left: 2px; background: #fff; border-bottom: 1px solid #c4c4c4; font: 17px/24px var(--ui); color: #111; }
.titlebar h1 { margin-left: 5px; }
.titlebar .i24 { align-self: flex-start; margin-top: 5px; }
.winctl { margin-left: auto; display: flex; padding-right: 2px; }
.winctl button { width: 70px; height: 34px; padding-bottom: 2px; }
.menubar { flex: none; height: 35px; display: flex; gap: 29px; padding: 0 0 2px 23px; background: linear-gradient(90deg, #f0f0f0, #f8f8f8); font: 17px/24px var(--ui); color: #222; }
.toolbar { flex: none; height: 37px; display: flex; align-items: center; padding: 0 0 1px 5px; background: linear-gradient(#fdfdfd, #f3f3f3); }
.toolbar > button { width: 24px; }
.toolbar > .drop { width: 23px; }
.sep { width: 1px; height: 24px; background: #b8b8b8; margin: 0 8px 0 9px; }
.toolbar > button + button:not(.drop) { margin-right: 2px; }
.toolbar > .sep + button { margin-right: 10px; }
.tools { display: flex; justify-content: space-between; width: 646px; }
.tools button { width: 24px; }
.workspace { flex: 1; min-height: 0; display: grid; grid-template-columns: 330px minmax(0, 1fr) 330px; border-top: 1px solid #8f8f8f; overflow: hidden; }

/* docked panels */
.dock { display: flex; flex-direction: column; gap: 6px; min-height: 0; overflow: visible; }
.panel { position: relative; background: var(--face); flex: none; }
.panel.fill { flex: 1; display: flex; flex-direction: column; }
.caption { height: 27px; display: flex; align-items: center; gap: 12px; padding: 0 8px 0 9px; background: #bfbfbf; font: 17px/24px var(--ui); color: #222; }
.caption h2 { flex: 1; }
.caption .drop::before { border-width: 6px 6px 0; }
.pbody { padding: 10px 7px 20px; }
.stack { display: flex; flex-direction: column; gap: 7px; padding: 9px 7px 9px; }
.sensor { width: 26px; height: 22px; margin-right: 4px; }
.r1 .dd { width: 107px; }
.timer { margin: 0 6px 0 18px; }
.spin.wide { width: 103px; margin-right: 2px; }
.halves { display: grid; grid-template-columns: 1fr 1fr; gap: 10px; }
.halves .btn { height: 33px; }
.one { width: 24px; height: 24px; border: 2px solid #858585; border-radius: 50%; color: #777; font-weight: bold; line-height: 20px; }
.checks { display: grid; grid-template-columns: 156px 1fr; height: 21px; }
.checks > div { display: flex; align-items: center; gap: 3px; }
.tabs { display: flex; height: 31px; background: #e4e4e4; font: 17px/24px var(--ui); color: #808080; }
.tabs > * { border-top: 1px solid #666; }
.tabs > i { flex: 1; }
.tabs button { justify-content: flex-start; gap: 5px; padding: 0 0 2px 3px; white-space: nowrap; }
.tabs .active { background: #f3f3f3; color: #222; border: 1px solid #666; border-top-color: transparent; border-radius: 0 0 5px 5px; }
.tabs .bar-left { border-left: 1px solid #666; }
.t111 { width: 111px; }
.t133 { width: 133px; }
.t141 { width: 141px; }
.t166 { width: 166px; }
.t176 { width: 176px; }
.grow { flex: 1; }
.far { margin-left: 6px; }
.focus { margin-bottom: 2px; }
.highlight { position: absolute; inset: 0 -5px -8px 0; border: 6px solid #fbf01c; pointer-events: none; z-index: 2; }
.pbody2 { padding: 1px 8px 12px 6px; }
.summary h3 { margin-top: 4px; text-align: center; font-weight: bold; font-size: 19px; line-height: 24px; }
.donuts { display: grid; grid-template-columns: 1fr 1fr; text-align: center; line-height: 28px; }
.donut { width: 119px; height: 119px; margin: 1px auto 0; border: 22px solid var(--desk); border-radius: 50%; font-weight: bold; font-size: 17px; line-height: 76px; }
.stats { display: grid; grid-template-columns: 151px 1fr; padding-left: 5px; }
.stats dl { display: grid; grid-template-columns: 69px 1fr; padding-left: 25px; align-content: start; line-height: 21px; }
.stats .sh { grid-column: 1 / 3; display: flex; gap: 4px; align-items: center; margin-left: -25px; font-weight: bold; font-size: 17px; line-height: 24px; }
.btn.run { width: 189px; padding-right: 14px; }
.btn.big { height: 40px; margin: 9px 0 6px 62px; }
.cooler { padding: 2px 7px 0; }
.cooler legend { margin-left: -1px; }
.line { height: 28px; gap: 3px; }
.clabel { width: 85px; margin-left: 4px; }
.line .tick { margin-right: 18px; }
.setrow { display: grid; grid-template-columns: 46px 60px 30px 60px 19px 65px; gap: 3px; align-items: center; margin-top: 3px; padding-left: 1px; }
.setrow > span:nth-of-type(3) { text-align: right; }
.setrow .btn { margin-left: 7px; }
.coolbtns { display: grid; grid-template-columns: 110px 110px 65px; gap: 7px; margin: 9px 0 4px; }

/* sequence window */
.desktop { padding: 38px 15px 0; min-width: 0; }
.window { border: 1px solid #777; background: var(--face); box-shadow: 2px 3px 9px rgba(0, 0, 0, .45); }
.wtitle { height: 46px; display: flex; align-items: center; gap: 5px; padding: 0 16px 2px 11px; background: #fff; font: 17px/24px var(--ui); color: #8f8f8f; }
.wtitle h2 { flex: 1; }
.wtitle button svg { color: #8f8f8f; }
.wbody { padding: 0 7px 13px 8px; }
.top { display: grid; grid-template-columns: 271fr 456fr 466fr; gap: 3px 10px; }
.targets { padding-top: 10px; }
.list { height: 162px; border: 1px solid #7a7a7a; background: #fff; padding: 4px 9px 0 8px; }
.lhead { display: flex; align-items: center; gap: 6px; height: 24px; color: #23419b; padding-left: 13px; }
.lhead i { flex: 1; height: 1px; background: #d5dbef; }
.litem { display: flex; align-items: center; gap: 6px; margin-top: 5px; }
.litem span { flex: 1; background: var(--face); line-height: 26px; padding-left: 4px; margin: 0 -4px; }
.lbtns { display: flex; justify-content: space-between; margin-top: 6px; }
.lbtns div { display: flex; gap: 3px; }
.lbtns .btn { width: 37px; }
.tdata { padding: 4px 8px 9px; }
.tdata legend, .status legend { margin-left: 0; }
.trow { height: 40px; display: grid; grid-template-columns: 22px 86px 1fr 97px; gap: 7px; align-items: center; }
.trow .btn { height: 29px; }
em, h4 { font-weight: bold; font-style: italic; font-size: 17px; }
em { padding-left: 3px; }
.pct { font-size: 25px; }
.pair { display: grid; grid-template-columns: 1fr 1fr; gap: 5px; }
.btn.more { display: flex; width: 110px; height: 16px; margin: 3px auto 0; }
.btn.selected { border: 2px solid #0078d7; margin-left: calc(50% - 42px); }
.equip { padding: 4px 11px 9px; }
.equip legend { margin-left: -4px; }
.erow { height: 40px; display: grid; grid-template-columns: 22px 92px 1fr 67px; gap: 9px; align-items: center; white-space: nowrap; }
.status { padding: 4px 15px 12px 6px; }
.srow { height: 30px; display: flex; align-items: center; gap: 6px; white-space: nowrap; }
.end { margin-left: auto; }
.status .bar.tall { margin-top: 12px; }
.tstat { padding-right: 6px; }
.tstat .srow { gap: 4px; }
.tprog { display: grid; grid-template-columns: 1fr 66px; gap: 16px; align-items: center; margin: 12px 0 0 12px; line-height: 18px; font-size: 18px; }
.tprog .bar { height: 18px; }
.delay { padding: 9px 13px 5px; }
.delay legend { margin-left: -6px; }
.dcols { display: grid; grid-template-columns: 204px 1fr; gap: 28px; }
.dcols h4 { line-height: 24px; }
.drow { display: grid; grid-template-columns: 20px 1fr 62px; gap: 4px; align-items: center; height: 30px; margin-top: 4px; white-space: nowrap; }

/* event table */
.events { width: 100%; table-layout: fixed; border-collapse: collapse; margin-top: 11px; }
.c111 { width: 111px; } .c122 { width: 122px; } .c55 { width: 55px; } .c93 { width: 93px; } .c99 { width: 99px; }
.c126 { width: 126px; } .c90 { width: 90px; } .c89 { width: 89px; } .c226 { width: 226px; } .c102 { width: 102px; }
.events th, .events td { border: 1px solid var(--desk); padding: 5px 5px 0; vertical-align: top; }
.events th { height: 44px; padding: 0; vertical-align: middle; font-size: 17px; border-bottom-width: 3px; }
.events td { height: 48px; }
.events .mid { padding: 12px 0 0; text-align: center; }
.events td .bar { margin-top: 5px; }
.events .cnt { text-align: center; padding-top: 10px; padding-right: 10px; }
.ev { display: flex; align-items: center; gap: 5px; height: 34px; }
.ud { display: flex; flex-direction: column; gap: 3px; margin-right: 2px; }
.ud svg { width: 18px; height: 16px; }
.ud svg:last-child { transform: rotate(180deg); }
.ud .none { color: #999; --amber: #c4c4c4; }
.flags { display: flex; gap: 8px; justify-content: center; align-items: flex-end; height: 36px; }
th .flags { height: 22px; }
.lt { width: 22px; height: 10px; margin-bottom: 3px; }
.wfoot { display: flex; justify-content: space-between; margin-top: 12px; }
.add { width: 189px; justify-content: flex-start; padding: 0 6px 0 4px; }
.add span { flex: 1; text-align: left; padding-left: 4px; }
.add .tri { border-width: 5px 4px 0; }

/* right dock */
.pbody3 { padding: 10px 8px 6px 6px; }
.wheel { display: flex; justify-content: space-between; padding: 7px 10px 8px; }
.cur { gap: 4px; height: 23px; }
.cur b { font-size: 17px; margin-left: 5px; }
.cur + label { display: block; line-height: 26px; }
.setf { gap: 8px; }
.setf .dd { width: 139px; }
.setf .btn { width: 61px; height: 31px; }
.knob { width: 72px; height: 72px; margin-top: 3px; border-radius: 50%; border: 5px solid #000; background: radial-gradient(circle at 40% 30%, #6d6d6d, #333 75%); box-shadow: 0 2px 4px rgba(0, 0, 0, .6); color: #e0e0e0; text-align: center; font: bold 18px/62px Lato, sans-serif; }
.hist { flex: 1; padding-top: 2px; }
.hist fieldset { padding: 3px 12px 0 11px; }
.hist legend { margin-left: -4px; }
.hopts { justify-content: space-between; height: 27px; padding-right: 3px; }
.hopts .tri { border-width: 6px 6px 0; }
.plot { height: 93px; background: #000; }
.levels { padding: 2px 0 3px; }
.wp, .bp { width: 16px; height: 14px; }
.wp { margin: 0 -7px 2px auto; }
.ramp { height: 16px; border: 1px solid #000; background: linear-gradient(90deg, #000, #fff); }
.bp { margin: 1px 0 0 -8px; }
.hist .str { margin-top: 7px; padding: 8px 12px 10px 11px; }
.str .plot { height: 96px; }
.bw { display: flex; justify-content: space-between; padding-top: 6px; }

/* status bar */
.statusbar { flex: none; height: 37px; display: flex; align-items: center; background: #f1f1f1; border-top: 1px solid #dadada; padding: 0 0 0 3px; font: 16px/22px var(--ui); white-space: nowrap; }
.statusbar > .bar { width: 225px; height: 24px; }
.ready { flex: 1; padding-left: 7px; }
.st { display: flex; align-items: center; gap: 5px; height: 28px; border-left: 1px solid #a8a8a8; padding-left: 6px; }
.st span:first-child { margin-right: 6px; }
.s141 { width: 141px; }
.s126 { width: 126px; }
.s166 { width: 166px; }
.s155 { width: 155px; }
.s120 { width: 120px; }
.s112 { width: 112px; }
.push { margin-left: 4px; }
.lamp { width: 24px; height: 24px; margin-left: -3px; border-radius: 50%; border: 1px solid #b5b5b5; background: radial-gradient(circle at 50% 35%, #e6e6e6, #c2c2c2); }
```
